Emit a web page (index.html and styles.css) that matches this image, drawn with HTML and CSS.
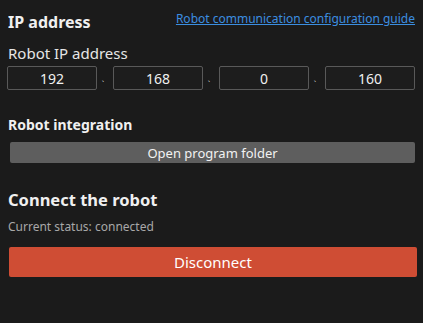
FILE: index.html
```html
<!DOCTYPE html>
<html>
<head>
    <title>Robot Connection</title>
    <link rel="stylesheet" href="styles.css">
</head>
<body>
    <div class="panel">
        <div class="header">
            <h1>IP address</h1>
            <a href="#" class="guide-link">Robot communication configuration guide</a>
        </div>
        <div class="field-label">Robot IP address</div>
        <div class="ip-row">
            <input type="text" class="ip-part" value="192">
            <span class="ip-sep">、</span>
            <input type="text" class="ip-part" value="168">
            <span class="ip-sep">、</span>
            <input type="text" class="ip-part" value="0">
            <span class="ip-sep">、</span>
            <input type="text" class="ip-part" value="160">
        </div>

        <h2>Robot integration</h2>
        <button class="button folder">Open program folder</button>

        <h1 class="connect-title">Connect the robot</h1>
        <div class="status">Current status: connected</div>
        <button class="button disconnect">Disconnect</button>
    </div>
</body>
</html>
```

FILE: styles.css
```css
body {
    font-family: "Noto Sans", "Open Sans", sans-serif;
    margin: 0;
    background-color: #1b1b1b;
    color: #f0f0f0;
}
.panel {
    padding: 8px 8px 0 7px;
}
.header {
    display: flex;
    justify-content: space-between;
    align-items: flex-start;
    padding-left: 1px;
}
h1 {
    font-size: 16px;
    font-weight: bold;
    margin: 2px 0 0 0;
    line-height: 24px;
}
.guide-link {
    color: #3b8ee0;
    font-size: 12px;
    line-height: 16px;
    margin-top: 3px;
}
.field-label {
    font-size: 15px;
    color: #e6e6e6;
    margin: 8px 0 0 1px;
    line-height: 22px;
}
.ip-row {
    display: flex;
    align-items: center;
    margin-top: 2px;
}
.ip-part {
    width: 90px;
    height: 24px;
    box-sizing: border-box;
    background-color: #1d1d1d;
    border: 1px solid #595959;
    border-radius: 2px;
    color: #f0f0f0;
    font-family: inherit;
    font-size: 14px;
    text-align: center;
    padding: 0;
    margin: 0;
}
.ip-sep {
    flex: 1;
    text-align: center;
    font-size: 9px;
    color: #cfcfcf;
    line-height: 18px;
}
h2 {
    font-size: 14px;
    font-weight: bold;
    margin: 24px 0 0 1px;
    line-height: 22px;
}
.button {
    display: block;
    border: none;
    border-radius: 2px;
    font-family: inherit;
    cursor: pointer;
    color: #f2f2f2;
    padding: 0;
}
.folder {
    background-color: #5e5e5e;
    font-size: 13px;
    height: 21px;
    width: calc(100% - 3px);
    margin: 6px 0 0 3px;
}
.connect-title {
    font-size: 16.5px;
    margin: 25px 0 0 1px;
}
.status {
    font-size: 12px;
    color: #a8a8a8;
    margin: 7px 0 0 1px;
    line-height: 16px;
}
.disconnect {
    background-color: #cf4d34;
    color: #ffffff;
    font-size: 15px;
    height: 30px;
    width: calc(100% + 0px);
    margin: 12px 0 0 2px;
}
```
